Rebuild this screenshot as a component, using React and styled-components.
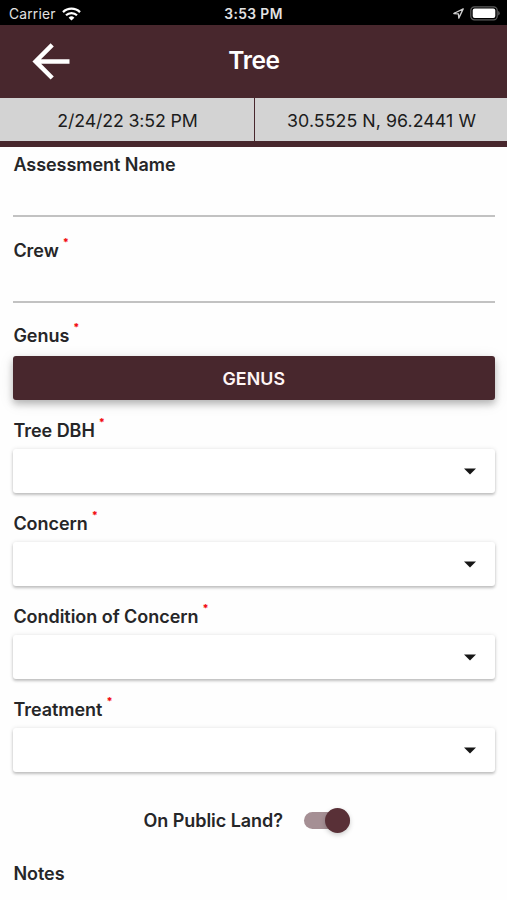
import React from "react";
import styled, { createGlobalStyle } from "styled-components";

const maroon = "#48272d";

const GlobalStyle = createGlobalStyle`
  * { box-sizing: border-box; }
  body {
    margin: 0;
    background: #fefefe;
    font-family: Inter, "Liberation Sans", sans-serif;
    color: #262628;
    overflow: hidden;
  }
`;

const Screen = styled.div`
  width: 507px;
  height: 900px;
  overflow: hidden;
  display: flex;
  flex-direction: column;
`;

const StatusBar = styled.div`
  flex: none;
  height: 25px;
  background: #000;
  color: #e2e2e2;
  display: grid;
  grid-template-columns: 1fr auto 1fr;
  align-items: center;
  padding: 2px 7px 0 9px;
  font-size: 13.8px;
  line-height: 18px;
`;

const Carrier = styled.div`
  display: flex;
  align-items: center;
  gap: 6px;
  letter-spacing: 0.2px;
`;

const Clock = styled.div`
  font-weight: 600;
  font-size: 13.8px;
  letter-spacing: 0.4px;
  margin-right: 2px;
`;

const StatusIcons = styled.div`
  display: flex;
  justify-content: flex-end;
  align-items: center;
  gap: 6px;
`;

const Header = styled.header`
  flex: none;
  height: 73px;
  background: ${maroon};
  color: #fff;
  display: grid;
  grid-template-columns: 1fr auto 1fr;
  align-items: center;
  padding: 0 31px 2px 32px;
`;

const BackButton = styled.button`
  width: 40px;
  height: 40px;
  padding: 0;
  border: 0;
  background: none;
  color: #fff;
  display: flex;
`;

const Title = styled.h1`
  margin: 0 0 2px;
  font-size: 24.5px;
  font-weight: 600;
  line-height: 30px;
  letter-spacing: -0.4px;
`;

const InfoBar = styled.div`
  flex: none;
  height: 49px;
  background: #d3d3d3;
  border-bottom: 6px solid ${maroon};
  display: grid;
  grid-template-columns: 255px 1fr;
`;

const InfoCell = styled.div`
  display: flex;
  align-items: center;
  justify-content: center;
  padding: 2px 0 0 1px;
  font-size: 17.8px;
  color: #1c1c1c;
  letter-spacing: ${(p) => p.$tracking}px;
  border-right: ${(p) => (p.$divided ? `1px solid ${maroon}` : "0")};
`;

const Form = styled.main`
  padding: 7px 12.5px 0 13px;
`;

const Field = styled.div`
  margin-bottom: ${(p) => p.$after}px;
`;

const Label = styled.label`
  display: flex;
  gap: 4px;
  height: 22px;
  padding-left: 0.4px;
  line-height: 22px;
  font-size: 18px;
  font-weight: 600;
  letter-spacing: -0.04px;
  white-space: nowrap;
`;

const Required = styled.span`
  color: #f20d12;
  font-size: 10.5px;
  font-weight: 800;
  line-height: 12px;
  margin-top: -3px;
`;

const TextInput = styled.input`
  display: block;
  width: 100%;
  height: 41px;
  padding: 0;
  border: 0;
  border-bottom: 2px solid #c2c2c2;
  background: transparent;
  outline: none;
`;

const GenusButton = styled.button`
  display: block;
  width: 100%;
  height: 44px;
  margin-top: 9px;
  padding: 1px 0 0;
  border: 0;
  border-radius: 3px;
  background: ${maroon};
  color: #fff5f5;
  font: 600 17.8px/43px Inter, "Liberation Sans", sans-serif;
  letter-spacing: 0.1px;
  box-shadow: 0 4px 7px rgba(0, 0, 0, 0.24), 0 3px 15px rgba(0, 0, 0, 0.1);
`;

const SelectBox = styled.div`
  height: 44px;
  margin-top: 7.2px;
  padding-right: 18.5px;
  display: flex;
  align-items: center;
  justify-content: flex-end;
  background: #fff;
  border-radius: 3px;
  box-shadow: 0 2px 3px rgba(0, 0, 0, 0.22), 0 0 4px rgba(0, 0, 0, 0.1);
`;

const ToggleRow = styled.div`
  display: flex;
  align-items: center;
  gap: 21px;
  height: 26px;
  margin: 35.5px 0 29px 130px;
`;

const Track = styled.div`
  width: 46px;
  height: 17px;
  border-radius: 9px;
  background: #a58f94;
  display: flex;
  align-items: center;
  justify-content: flex-end;
`;

const Knob = styled.div`
  flex: none;
  width: 25px;
  height: 25px;
  border-radius: 50%;
  background: #593037;
  box-shadow: 0 2px 5px rgba(0, 0, 0, 0.2);
`;

const WifiIcon = () => (
  <svg width="19" height="14" viewBox="0 0 19 14" fill="none" stroke="#fff">
    <path d="M1 5.1a12.2 12.2 0 0 1 17 0" strokeWidth="2.3" />
    <path d="M4 8.3a7.9 7.9 0 0 1 11 0" strokeWidth="2.2" />
    <path d="M9.5 13.6 6.6 10.7a4.2 4.2 0 0 1 5.8 0Z" fill="#fff" stroke="none" />
  </svg>
);

const LocationIcon = () => (
  <svg width="11" height="11" viewBox="0 0 11 11" fill="none" stroke="#cfcfcf" strokeWidth="1.3" strokeLinejoin="round">
    <path d="M10.2.9 .8 5.5l4.6.3.4 4.3Z" />
  </svg>
);

const BatteryIcon = () => (
  <svg width="30" height="15" viewBox="0 0 30 15">
    <rect x=".8" y=".8" width="26.4" height="13" rx="3.6" fill="none" stroke="#5e5e5e" strokeWidth="1.2" />
    <rect x="2.7" y="2.6" width="22.6" height="9.5" rx="2" fill="#fff" />
    <path d="M28.2 5q1.5.6 1.5 2.3t-1.5 2.3Z" fill="#5e5e5e" />
  </svg>
);

const BackArrow = () => (
  <svg width="40" height="40" viewBox="0 0 40 40" fill="none" stroke="currentColor" strokeWidth="4.5">
    <path d="M37.5 20.4H4.5M20.2 3.8 3.6 20.4l16.6 16.6" />
  </svg>
);

const Caret = () => (
  <svg width="12" height="7" viewBox="0 0 12 7">
    <path d="M0 .5h12l-6 6Z" fill="#161616" />
  </svg>
);

const FieldLabel = ({ children, required }) => (
  <Label>
    {children}
    {required && <Required>*</Required>}
  </Label>
);

const selects = ["Tree DBH", "Concern", "Condition of Concern", "Treatment"];

export default function App() {
  return (
    <>
      <GlobalStyle />
      <Screen>
        <StatusBar>
          <Carrier>
            Carrier <WifiIcon />
          </Carrier>
          <Clock>3:53 PM</Clock>
          <StatusIcons>
            <LocationIcon />
            <BatteryIcon />
          </StatusIcons>
        </StatusBar>
        <Header>
          <BackButton aria-label="Back">
            <BackArrow />
          </BackButton>
          <Title>Tree</Title>
        </Header>
        <InfoBar>
          <InfoCell $divided $tracking={-0.15}>2/24/22 3:52 PM</InfoCell>
          <InfoCell $tracking={0.05}>30.5525 N, 96.2441 W</InfoCell>
        </InfoBar>
        <Form>
          <Field $after={22.5}>
            <FieldLabel>Assessment Name</FieldLabel>
            <TextInput aria-label="Assessment Name" />
          </Field>
          <Field $after={22.5}>
            <FieldLabel required>Crew</FieldLabel>
            <TextInput aria-label="Crew" />
          </Field>
          <Field $after={20.3}>
            <FieldLabel required>Genus</FieldLabel>
            <GenusButton>GENUS</GenusButton>
          </Field>
          {selects.map((name) => (
            <Field key={name} $after={19.7}>
              <FieldLabel required>{name}</FieldLabel>
              <SelectBox>
                <Caret />
              </SelectBox>
            </Field>
          ))}
          <ToggleRow>
            <Label>On Public Land?</Label>
            <Track>
              <Knob />
            </Track>
          </ToggleRow>
          <FieldLabel>Notes</FieldLabel>
        </Form>
      </Screen>
    </>
  );
}
